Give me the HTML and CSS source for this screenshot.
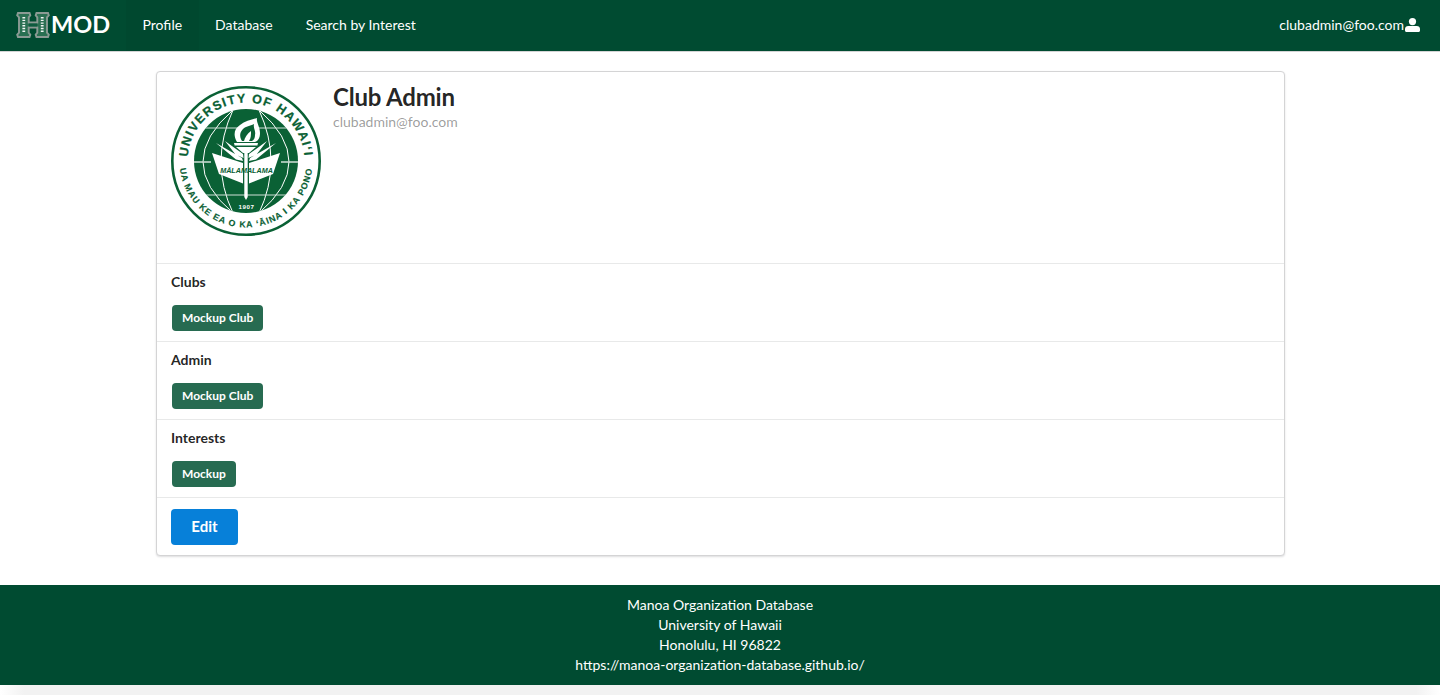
FILE: index.html
```html
<!DOCTYPE html>
<html lang="en">
<head>
<meta charset="utf-8">
<title>Manoa Organization Database</title>
<link rel="stylesheet" href="styles.css">
</head>
<body>
<nav class="menu">
  <a class="brand">
    <svg class="h-logo" viewBox="0 0 34 26" aria-hidden="true">
      <path d="M2 1h11.500l.8 2.400-1.600 2v5.100h8.600V5.400l-1.600-2 .8-2.400H32l.8 2.400-1.800 2v15.200l1.800 2-.8 2.400H20.500l-.8-2.400 1.600-2v-5.100h-8.600v5.100l1.600 2-.8 2.400H2l-.8-2.400 1.800-2V5.400l-1.800-2z" fill="#2a6f52" stroke="#8b9a94" stroke-width="1.900"/>
      <path d="M7.800 5v16M26.200 5v16" stroke="#f2f6f4" stroke-width="2.800" stroke-dasharray="1.400 1.300"/>
      <path d="M12.800 11.500h8.400v3H12.800z" fill="#0d5a3e"/>
    </svg>
    <span class="brand-text">MOD</span>
  </a>
  <a class="nav-item nav-active">Profile</a>
  <a class="nav-item">Database</a>
  <a class="nav-item">Search by Interest</a>
  <div class="nav-user">
    <span>clubadmin@foo.com</span>
    <svg class="user-icon" viewBox="0 0 15 14" aria-hidden="true"><circle cx="7.500" cy="3.600" r="3.600" fill="#fff"/><path fill="#fff" d="M3.200 8h8.600c1.800 0 3.200 1.300 3.200 3.100v1.400c0 .9-.6 1.500-1.500 1.500h-12C.6 14 0 13.400 0 12.500v-1.400C0 9.300 1.400 8 3.200 8z"/></svg>
  </div>
</nav>

<main class="page">
  <section class="card">
    <div class="profile">
      <svg class="seal" viewBox="0 0 150 150" role="img" aria-label="University of Hawaii seal">
        <defs>
          <path id="seal-top" d="M75 75m-58.500 0a58.500 58.500 0 0 1 117 0"/>
          <path id="seal-bottom" d="M75 75m-66.500 0a66.500 66.500 0 0 0 133 0"/>
          <clipPath id="globe-clip"><circle cx="75" cy="75" r="52"/></clipPath>
        </defs>
        <circle cx="75" cy="75" r="73.700" fill="#fff" stroke="#0a6135" stroke-width="2.600"/>
        <circle cx="75" cy="75" r="52" fill="#0a6135"/>
        <g clip-path="url(#globe-clip)" fill="none" stroke="#fff" stroke-width="1">
          <path d="M62 24Q38 76 62 127M88 24Q112 76 88 127M62 24Q2 76 62 127M88 24Q148 76 88 127"/>
          <path d="M28 42h94M28 109h94" stroke="#cfe0d7"/>
          <path d="M22 76h18M110 76h18" stroke="#cfe0d7" stroke-width="1.300"/>
        </g>
        <path d="M66 56c-4-7-3-13 3-17 5-4 11-5 17-7-1 4 3 9 3 15 0 5-2 8-5 9z" fill="#fff"/>
        <path d="M71 55c-3-5-2-9 1-12 3-3 7-3 11-5-1 4 2 7 1 11 0 3-1 5-3 6z" fill="#0a6135"/>
        <path d="M73 55c1-4 3-7 7-10 0 4 0 7-2 10z" fill="#fff"/>
        <path d="M63 57h24l-.6 2.500H63.600z" fill="#fff"/>
        <path d="M65 61h20l-7 6H72z" fill="#fff"/>
        <path d="M73.300 66h3.400v45l-1.700 3-1.700-3z" fill="#fff"/>
        <path d="M41 67l31 10v20.500L48 88zM109 67L78 77v20.500L102 88z" fill="#fff"/>
        <path d="M45 57l26 15 1 3-7-1.500zM54 55l18 13 .5 4-8-3.500zM105 57L79 72l-1 3 7-1.500zM96 55L78 68l-.5 4 8-3.500z" fill="#fff"/>
        <text class="seal-book" x="75.500" y="87" text-anchor="middle">MĀLAMALAMA</text>
        <text class="seal-year" x="75.500" y="122.500" text-anchor="middle">1907</text>
        <text class="seal-top"><textPath href="#seal-top" startOffset="50%" text-anchor="middle">UNIVERSITY OF HAWAI‘I</textPath></text>
        <text class="seal-bottom"><textPath href="#seal-bottom" startOffset="50%" text-anchor="middle">UA MAU KE EA O KA ‘ĀINA I KA PONO</textPath></text>
      </svg>
      <div class="identity">
        <h1 class="name">Club Admin</h1>
        <div class="email">clubadmin@foo.com</div>
      </div>
    </div>
    <div class="section">
      <h2 class="section-title">Clubs</h2>
      <span class="tag">Mockup Club</span>
    </div>
    <div class="section">
      <h2 class="section-title">Admin</h2>
      <span class="tag">Mockup Club</span>
    </div>
    <div class="section">
      <h2 class="section-title">Interests</h2>
      <span class="tag">Mockup</span>
    </div>
    <div class="actions">
      <button class="edit" type="button">Edit</button>
    </div>
  </section>
</main>

<footer class="footer">
  <div>Manoa Organization Database</div>
  <div>University of Hawaii</div>
  <div>Honolulu, HI 96822</div>
  <div>https://manoa-organization-database.github.io/</div>
</footer>
<div class="page-end"></div>
</body>
</html>
```

FILE: styles.css
```css
* { box-sizing: border-box; }
html, body { height: 100%; }
body {
  margin: 0;
  background: #fff;
  color: rgba(0, 0, 0, .87);
  font-family: Lato, "Helvetica Neue", Arial, sans-serif;
  font-size: 14px;
  line-height: 20px;
  overflow: hidden;
}
.menu {
  display: flex;
  align-items: stretch;
  height: 52px;
  background: #004b31;
  border-bottom: 1px solid #d4d4d5;
  color: #fff;
}
.brand {
  display: flex;
  align-items: center;
  gap: 1px;
  width: 126px;
  padding: 0 0 2px 16px;
}
.h-logo { width: 34px; height: 26px; flex: none; }
.brand-text { font-size: 23.500px; font-weight: 700; line-height: 1; }
.nav-item {
  display: flex;
  align-items: center;
  padding: 0 16.500px 2px;
}
.nav-active { background: rgba(0, 0, 0, .03); }
.nav-user {
  display: flex;
  align-items: center;
  gap: 1px;
  margin-left: auto;
  padding: 0 20px 2px 0;
}
.user-icon { width: 15px; height: 14px; }
.page { padding: 19px 0 29px; }
.card {
  width: 1129px;
  margin-left: 156px;
  background: #fff;
  border: 1px solid #d4d4d5;
  border-radius: 4px;
  box-shadow: 0 1px 2px rgba(34, 36, 38, .15);
}
.profile {
  display: flex;
  gap: 12px;
  height: 191px;
  padding: 14px;
}
.seal { width: 150px; height: 150px; flex: none; }
.seal-top { font: 700 12.500px "Liberation Sans", Arial, sans-serif; letter-spacing: 1.350px; fill: #0a6135; stroke: #0a6135; stroke-width: .25px; }
.seal-bottom { font: 700 8.800px "Liberation Sans", Arial, sans-serif; letter-spacing: .95px; fill: #0a6135; stroke: #0a6135; stroke-width: .15px; }
.seal-book { font: italic 700 7.200px "Liberation Sans", Arial, sans-serif; fill: #0a6135; }
.seal-year { font: 700 6.200px "Liberation Sans", Arial, sans-serif; fill: #fff; letter-spacing: .6px; }
.name {
  margin: 0;
  font-size: 24px;
  font-weight: 700;
  letter-spacing: -.2px;
  line-height: 22px;
  padding-bottom: 4px;
}
.email { color: rgba(0, 0, 0, .4); }
.section {
  height: 78px;
  padding: 8px 14px 0;
  border-top: 1px solid rgba(34, 36, 38, .1);
}
.section-title {
  margin: 0 0 13px;
  font-size: 14px;
  font-weight: 700;
  line-height: 20px;
}
.tag {
  display: inline-block;
  margin-left: 1px;
  height: 26px;
  padding: 0 10px;
  background: #276b51;
  border-radius: 4px;
  color: #fff;
  font-size: 12px;
  font-weight: 700;
  line-height: 26px;
}
.actions {
  height: 58px;
  padding: 11px 14px 0;
  border-top: 1px solid rgba(34, 36, 38, .1);
}
.edit {
  width: 67px;
  height: 36px;
  border: 0;
  border-radius: 4px;
  background: #0780d9;
  color: #fff;
  font: 700 15px Lato, sans-serif;
  padding: 0 0 2px;
}
.footer {
  height: 100px;
  padding: 10px 0;
  background: #004b31;
  color: #fff;
  text-align: center;
}
.page-end {
  height: 10px;
  background: linear-gradient(90deg, #fff, #f2f2f2 24px, #f2f2f2 calc(100% - 24px), #fff);
}
```
